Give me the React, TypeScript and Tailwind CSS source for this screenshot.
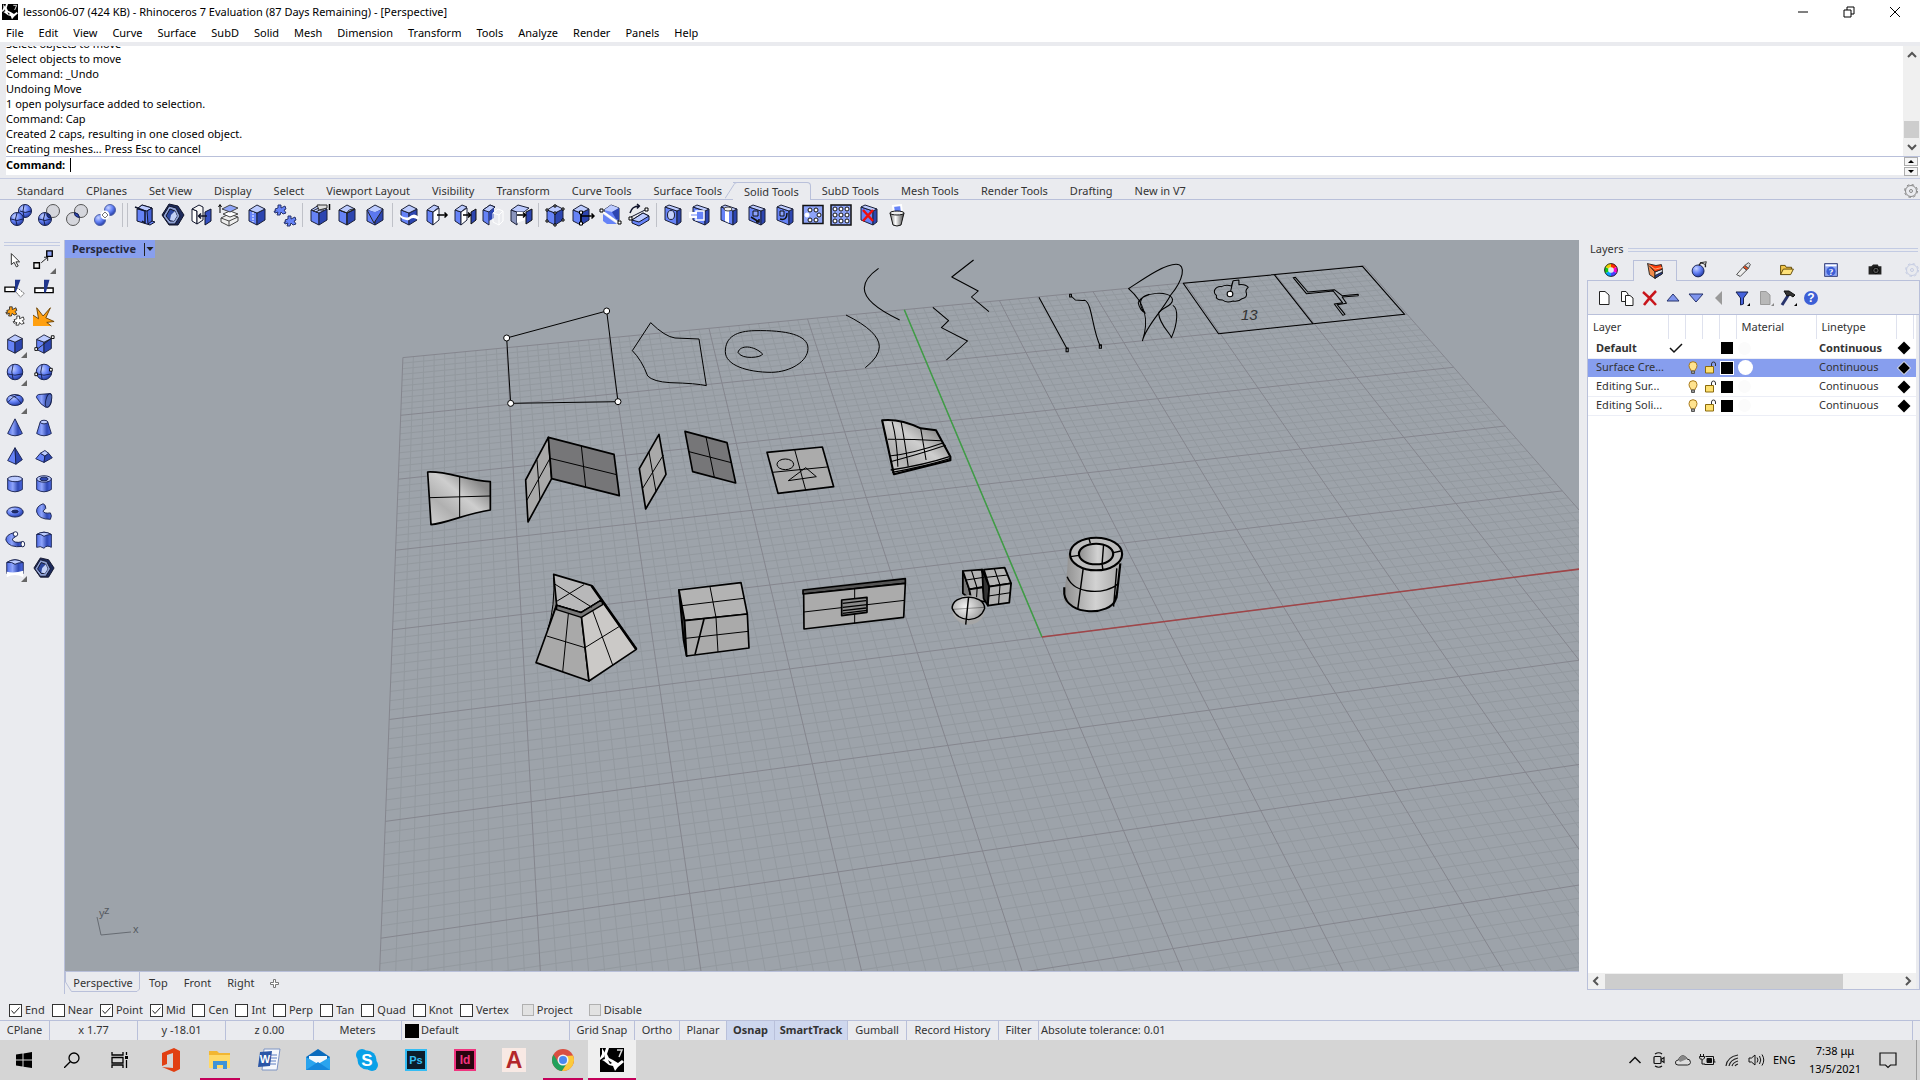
import React from 'react'
import { clsx } from 'clsx'

type Point = [number, number]

const menus = [
  'File', 'Edit', 'View', 'Curve', 'Surface', 'SubD', 'Solid', 'Mesh', 'Dimension',
  'Transform', 'Tools', 'Analyze', 'Render', 'Panels', 'Help',
]

const history = [
  'Select objects to move',
  'Select objects to move',
  'Command: _Undo',
  'Undoing Move',
  '1 open polysurface added to selection.',
  'Command: Cap',
  'Created 2 caps, resulting in one closed object.',
  'Creating meshes... Press Esc to cancel',
]

const toolTabs = [
  'Standard', 'CPlanes', 'Set View', 'Display', 'Select', 'Viewport Layout', 'Visibility',
  'Transform', 'Curve Tools', 'Surface Tools', 'Solid Tools', 'SubD Tools', 'Mesh Tools',
  'Render Tools', 'Drafting', 'New in V7',
]

const toolGroups = [
  ['union', 'difference', 'intersection', 'boolSplit'],
  ['shell', 'nut', 'extractSrf', 'offsetSlab', 'cubeDash', 'join'],
  ['filletEdge', 'cubeRound', 'cubeChamfer'],
  ['wireCut', 'moveFace', 'moveFaceTo', 'ghostFace', 'extrudeFace'],
  ['cubePoints', 'moveEdge', 'cutEdge', 'rotateFace'],
  ['hole', 'holeRect', 'holeRound', 'holeMove', 'holeRotate', 'holeArray', 'holeGrid', 'holeDelete', 'holeBin'],
]

const sideTools: [string, boolean][] = [
  ['pointer', false], ['moveCopy', true],
  ['trim', false], ['split', false],
  ['joinOrange', false], ['explode', false],
  ['cube', true], ['cubeDiagonal', false],
  ['sphere', true], ['sphereDots', false],
  ['ellipsoid', true], ['paraboloid', false],
  ['cone', false], ['truncCone', false],
  ['pyramid', false], ['truncPyramid', false],
  ['cylinder', false], ['tube', false],
  ['torus', false], ['pipe', false],
  ['pipeCaps', false], ['extrudeCurve', false],
  ['extrudeSrf', true], ['nut', false],
]

const osnaps: [string, boolean][] = [
  ['End', true], ['Near', false], ['Point', true], ['Mid', true], ['Cen', false], ['Int', false],
  ['Perp', false], ['Tan', false], ['Quad', false], ['Knot', false], ['Vertex', false],
]

const layers = [
  { name: 'Default', current: true, selected: false },
  { name: 'Surface Cre...', current: false, selected: true },
  { name: 'Editing Sur...', current: false, selected: false },
  { name: 'Editing Soli...', current: false, selected: false },
]

const cubeBody = (
  <g stroke="#1b2038" strokeLinejoin="round">
    <path d="M4 7 12 10V22L4 18Z" fill="#6683f7" />
    <path d="M12 10 20 6V17L12 22Z" fill="#2c45b0" />
    <path d="M4 7 12 2 20 6 12 10Z" fill="#bccbff" />
  </g>
)

const slabBody = (
  <g stroke="#1b2038" strokeLinejoin="round">
    <path d="M4 4 16 8V22L4 17Z" fill="#6683f7" />
    <path d="M16 8 20 6V19L16 22Z" fill="#2c45b0" />
    <path d="M4 4 8 2 20 6 16 8Z" fill="#bccbff" />
  </g>
)

const halfBox = (
  <g stroke="#1b2038" strokeLinejoin="round">
    <path d="M2 7 8 9V22L2 18Z" fill="#6683f7" />
    <path d="M2 7 9 2 14 4 8 9Z" fill="#bccbff" />
    <path d="M8 9 14 5V17L8 22Z" fill="#fff" />
  </g>
)

const sphereBody = (
  <g stroke="#16204e">
    <circle cx="12" cy="12" r="8.5" fill="url(#ball)" />
    <path d="M3.5 14Q12 17 20.5 14M10 3.8Q7 12 10 20.2" fill="none" />
  </g>
)

const puzzle = 'M2 6 5 5 5 2 8 2 8 5 12 3 13 6 11 7 13 10 10 11 8 9 7 12 4 12 5 9 2 10 1 8 3 8Z'

const nutBody = (
  <g strokeLinejoin="round">
    <path d="M1 12 8 1 17 3 23 12 17 22 8 22Z" fill="#1d2a5c" stroke="#10142b" />
    <path d="M2 13 8 3 15 5 19 13 14 21 8 21Z" fill="#8fa1d4" stroke="#10142b" />
    <path d="M5 13 9 6 14 8 16 13 13 18 9 18Z" fill="#2c479f" stroke="#10142b" />
    <path d="M9 17 10 12 14 8 16 13 13 18Z" fill="#c3d1f7" />
  </g>
)

const icons: Record<string, React.ReactNode> = {
  union: (
    <g stroke="#16204e">
      <circle cx="16" cy="8" r="6.5" fill="url(#ball)" />
      <circle cx="8" cy="16" r="6.5" fill="url(#ball)" />
      <path d="M2 16Q8 19 14 16M8 10Q5 16 8 22M15 2Q13 8 15 14M11 8Q16 11 22 8" fill="none" />
    </g>
  ),
  difference: (
    <g stroke="#16204e">
      <circle cx="8" cy="16" r="6.5" fill="url(#ball)" />
      <path d="M2 16Q8 19 14 16M8 10Q5 16 8 22" fill="none" />
      <circle cx="16" cy="8" r="6.5" fill="#d5d6dc" stroke="#555" />
      <path d="M10 10Q14 11 14 15Q9 15 10 10Z" fill="#1c2f86" />
    </g>
  ),
  intersection: (
    <g stroke="#555">
      <circle cx="16" cy="8" r="6.5" fill="#d5d6dc" />
      <circle cx="8" cy="16" r="6.5" fill="#d5d6dc" />
      <path d="M9.500 9.500Q14 10 14.500 14.500Q9 14 9.500 9.500Z" fill="#2c45b0" stroke="#16204e" />
    </g>
  ),
  boolSplit: (
    <g stroke="#5163a8">
      <circle cx="17" cy="7" r="5.500" fill="url(#ball)" />
      <circle cx="7" cy="17" r="5.500" fill="url(#ball)" />
      <circle cx="12" cy="12" r="3.500" fill="#eceef6" stroke="#fff" strokeWidth="2" />
      <path d="M9 12 12 9 15 12 12 15Z" fill="#fff" stroke="#777" />
    </g>
  ),
  shell: (
    <g stroke="#10142b" strokeLinejoin="round">
      <path d="M4 6 9 2 19 5V18L22 19 17 22 4 18Z" fill="#6683f7" />
      <path d="M4 6 9 2 19 5 14 8Z" fill="#bccbff" />
      <path d="M14 8 19 5V18L15 21Z" fill="#4662d8" />
      <path d="M2 4 12 8V20L9 18" fill="none" strokeWidth="1.500" />
    </g>
  ),
  nut: nutBody,
  extractSrf: (
    <g stroke="#10142b" strokeLinejoin="round">
      <path d="M3 6 8 8V21L3 18Z" fill="#fff" />
      <path d="M3 6 10 2 14 4V17L8 21V8Z" fill="#f5f5f5" />
      <path d="M16 9 22 6V18L16 22Z" fill="#3551c4" />
      <path d="M18 13H10M12 10.500 9.500 13 12 15.500" fill="none" strokeWidth="1.500" />
    </g>
  ),
  offsetSlab: (
    <g stroke="#444" strokeLinejoin="round">
      <path d="M4 15 12 11 21 14V18L12 23 4 19Z" fill="#eee" />
      <path d="M4 15 12 18 21 14M12 18V23" fill="none" />
      <path d="M6 11 13 8 21 11 13 14Z" fill="#fff" />
      <path d="M5 6 13 2 21 5 13 9Z" fill="#8ea4f8" />
      <path d="M3 10V2M1.500 4 3 1.500 4.500 4" fill="none" stroke="#000" />
    </g>
  ),
  cubeDash: <g>{cubeBody}<path d="M8 9V19" stroke="#fff" strokeDasharray="2 1" /></g>,
  join: (
    <g fill="#6683f7" stroke="#27336c">
      <path d={puzzle} />
      <path d={puzzle} transform="translate(10 11)" />
    </g>
  ),
  filletEdge: (
    <g>
      {cubeBody}
      <path d="M6 8Q12 4 14 6M9 9Q12 6 17 7" fill="none" stroke="#222" />
      <path d="M22.500 1V7" stroke="#000" strokeWidth="1.500" />
      <path d="M10 2H20V5L12 7Z" fill="#ddd" stroke="#333" />
    </g>
  ),
  cubeRound: <g>{cubeBody}<path d="M12 22V10L20 6Q13 6 12 10L4 7" fill="none" stroke="#222" /></g>,
  cubeChamfer: (
    <g>
      {cubeBody}
      <path d="M4 7 11 20 20 6 12 9Z" fill="#5c78ef" />
      <path d="M4 7 11 20 20 6" fill="none" stroke="#222" />
    </g>
  ),
  wireCut: (
    <g>
      {cubeBody}
      <path d="M2 11Q8 16 12 14Q17 9 22 14L21 17Q16 13 12 17Q7 18 3 14Z" fill="#fff" />
    </g>
  ),
  moveFace: <g>{halfBox}<path d="M12 12H22M19.500 9.500 22 12 19.500 14.500" fill="none" stroke="#000" strokeWidth="1.500" /></g>,
  moveFaceTo: (
    <g>
      {halfBox}
      <path d="M18 9 23 6V17L18 21Z" fill="#2c45b0" stroke="#111" />
      <path d="M10 12H17M15 9.500 17.500 12 15 14.500" fill="none" stroke="#000" strokeWidth="1.500" />
    </g>
  ),
  ghostFace: (
    <g>
      <path d="M2 7 9 2 14 4 8 9V22L2 18Z" fill="#6683f7" stroke="#1b2038" />
      <path d="M2 7 9 2 14 4 8 9Z" fill="#bccbff" stroke="#1b2038" />
      <path d="M8 9 13 5V15L8 18Z" fill="#2c45b0" />
      <path d="M12 10 17 6 22 8V18L18 22 12 19ZM12 10 18 12 22 8M18 12V22" fill="none" stroke="#fff" />
    </g>
  ),
  extrudeFace: (
    <g>
      <path d="M2 7 8 9V22L2 18Z" fill="#8a95bd" stroke="#1b2038" />
      <path d="M2 7 9 2 20 5 15 9 8 9Z" fill="#bccbff" stroke="#1b2038" />
      <path d="M8 9 16 9V17L8 20Z" fill="#fff" />
      <path d="M17 9 23 6V17L17 21Z" fill="#2c45b0" stroke="#111" />
      <path d="M8 12H16M14 9.500 16.500 12 14 14.500" fill="none" stroke="#000" strokeWidth="1.500" />
    </g>
  ),
  cubePoints: (
    <g>
      {cubeBody}
      <path d="M3 6h2v2H3zM11 2h2v2h-2zM19 5h2v2h-2zM11 9h2v2h-2zM3 17h2v2H3zM11 21h2v2h-2zM19 16h2v2h-2z" fill="#fff" stroke="#000" />
    </g>
  ),
  moveEdge: (
    <g>
      <g transform="translate(-2 0)">{cubeBody}</g>
      <path d="M10 8V20M10 13H23M20.500 10.500 23 13 20.500 15.500" fill="none" stroke="#000" strokeWidth="1.500" />
      <path d="M8.500 8h3v3h-3zM8.500 19h3v3h-3z" fill="#fff" stroke="#000" />
    </g>
  ),
  cutEdge: (
    <g>
      <path d="M5 7 12 2 20 5V17L18 18 6 10Z" fill="#6683f7" stroke="#1b2038" />
      <path d="M5 7 12 2 20 5 13 9Z" fill="#bccbff" />
      <path d="M13 9 20 5V17L17 16Z" fill="#2c45b0" />
      <path d="M4 11 18 21H8L4 18Z" fill="#6683f7" />
      <path d="M3 8 20 20" stroke="#fff" strokeWidth="2" />
      <path d="M1 6h3v3H1zM19 18h3v3h-3z" fill="#fff" stroke="#000" />
    </g>
  ),
  rotateFace: (
    <g stroke="#10142b" strokeLinejoin="round">
      <path d="M5 17 16 10 22 13V17L12 23 5 20Z" fill="#6683f7" />
      <path d="M5 17 16 10 22 13 12 19Z" fill="#bccbff" />
      <path d="M4 14 18 7" />
      <path d="M3 10Q5 3 12 3M10 1 12.500 3 10 5.500" fill="none" strokeWidth="1.500" />
      <path d="M2 14h3v3H2zM18 5h3v3h-3z" fill="#fff" stroke="#000" />
    </g>
  ),
  hole: <g>{slabBody}<ellipse cx="10" cy="12" rx="3.500" ry="4.500" fill="#c5d1fb" stroke="#1b2038" /></g>,
  holeRect: (
    <g>
      {slabBody}
      <path d="M7 8H15V17H7Z" fill="none" stroke="#fff" strokeWidth="1.500" />
      <path d="M0 9H8V15H0Z" fill="#fff" />
      <path d="M2 12H12" stroke="#6683f7" />
    </g>
  ),
  holeRound: (
    <g>
      {slabBody}
      <path d="M8 6 12 8V20L8 18Z" fill="#fff" />
      <ellipse cx="11" cy="6" rx="4" ry="2" fill="#eee" stroke="#444" />
    </g>
  ),
  holeMove: <g>{slabBody}<path d="M8 8H13V13H8Z" fill="#8da3fb" stroke="#111" /><path d="M6 14 14 19M14 16V19H11" fill="none" stroke="#111" strokeWidth="1.500" /></g>,
  holeRotate: <g>{slabBody}<path d="M7 8H11V13H7Z" fill="#8da3fb" stroke="#111" /><path d="M7 16Q14 18 14 10" fill="none" stroke="#111" strokeWidth="1.500" /></g>,
  holeArray: (
    <g stroke="#111">
      <rect x="2" y="2.500" width="20" height="18" fill="#8ea4f8" strokeWidth="1.500" />
      <g fill="#fff">
        <circle cx="9" cy="7" r="2" /><circle cx="15" cy="7" r="2" /><circle cx="18" cy="12" r="2" />
        <circle cx="15" cy="17" r="2" /><circle cx="9" cy="17" r="2" /><circle cx="6" cy="12" r="2" stroke="#fff" />
      </g>
    </g>
  ),
  holeGrid: (
    <g stroke="#111">
      <rect x="2" y="2" width="20" height="20" fill="#8ea4f8" strokeWidth="1.500" />
      {[6, 12, 18].map(cy => [6, 12, 18].map(cx => <circle key={`${cx}-${cy}`} cx={cx} cy={cy} r="2" fill="#fff" />))}
    </g>
  ),
  holeDelete: <g>{slabBody}<path d="M6 7 16 18M16 7 6 18" stroke="#f00d0d" strokeWidth="2.500" /></g>,
  holeBin: (
    <g>
      <path d="M8 3 16 2 17 10H9Z" fill="#6683f7" stroke="#fff" strokeWidth="2" />
      <path d="M5 10 8 22Q12 24 16 22L19 10Z" fill="url(#steel)" stroke="#111" />
      <ellipse cx="12" cy="10" rx="7" ry="2" fill="#eee" stroke="#111" />
    </g>
  ),
  pointer: <path d="M8 5V17L11 14.500 13.500 19.500 15.500 18.500 13 14H17Z" fill="#fff" stroke="#222" />,
  moveCopy: (
    <g>
      <path d="M9 15 16 9M12 9H16V13" fill="none" stroke="#111" />
      <path d="M1 15h6v6H1z" fill="#eee" stroke="#000" strokeWidth="1.500" />
      <path d="M15 2h6v6h-6z" fill="#8ea4f8" stroke="#000" strokeWidth="1.500" />
    </g>
  ),
  trim: (
    <g>
      <path d="M1 11H12V16H1Z" fill="#fff" stroke="#000" strokeWidth="1.500" />
      <path d="M12 15 15 12 22 18 18 22Z" fill="#fff" stroke="#444" strokeDasharray="2 1" />
      <path d="M12 3H18L13 16H12Z" fill="#20368d" />
    </g>
  ),
  split: (
    <g>
      <path d="M2 12H22V17H2Z" fill="#fff" stroke="#000" strokeWidth="1.500" />
      <path d="M12 3H18L14 17H12Z" fill="#20368d" />
    </g>
  ),
  joinOrange: (
    <g stroke="#333">
      <path d={puzzle} fill="#ffa011" transform="translate(1 0)" />
      <path d={puzzle} fill="#fff" transform="translate(9 10)" />
    </g>
  ),
  explode: (
    <g>
      <path d="M0 23V11L6 15 4 3 11 12 19 3 14 14 23 18 15 19 20 23Z" fill="#ffa011" />
      <path d="M0 11 6 15 4 3 11 12 19 3 14 14 23 18 15 19 20 23" fill="none" stroke="#6b4200" />
    </g>
  ),
  cube: cubeBody,
  cubeDiagonal: (
    <g>
      {cubeBody}
      <path d="M4 18 21 5" stroke="#222" />
      <path d="M2 16h3v3H2zM20 3h3v3h-3z" fill="#fff" stroke="#000" />
    </g>
  ),
  sphere: sphereBody,
  sphereDots: <g>{sphereBody}<path d="M2 13h3v3H2zM18 8h3v3h-3z" fill="#fff" stroke="#000" /></g>,
  ellipsoid: (
    <g stroke="#16204e">
      <ellipse cx="12" cy="12" rx="9" ry="6" fill="url(#ball)" />
      <path d="M4 15Q11 6 17 7M7 7Q14 8 19 16" fill="none" />
    </g>
  ),
  paraboloid: (
    <g stroke="#16204e">
      <path d="M19 5 6 6Q2 8 5 11Q8 17 14 20Q20 20 20 12Z" fill="url(#metal)" />
      <ellipse cx="17" cy="12.500" rx="3" ry="7.500" fill="#5069bd" transform="rotate(14 17 12.500)" />
    </g>
  ),
  cone: <path d="M12 2 20 18Q12 23 4 18Z" fill="url(#metal)" stroke="#16204e" />,
  truncCone: (
    <g stroke="#16204e">
      <path d="M8 5 4 18Q12 23 20 18L16 5Z" fill="url(#metal)" />
      <ellipse cx="12" cy="5.500" rx="4" ry="2" fill="#bccbff" />
    </g>
  ),
  pyramid: (
    <g stroke="#16204e" strokeLinejoin="round">
      <path d="M12 3 4 17 13 21Z" fill="#6683f7" />
      <path d="M12 3 13 21 20 16Z" fill="#2c45b0" />
    </g>
  ),
  truncPyramid: (
    <g stroke="#16204e" strokeLinejoin="round">
      <path d="M8 9 3 15 12 19 13 12Z" fill="#6683f7" />
      <path d="M13 12 12 19 21 14 17 9Z" fill="#2c45b0" />
      <path d="M8 9 13 6 17 9 13 12Z" fill="#bccbff" />
    </g>
  ),
  cylinder: (
    <g stroke="#16204e">
      <path d="M4 6V18Q12 23 20 18V6Z" fill="url(#metal)" />
      <ellipse cx="12" cy="6.500" rx="8" ry="3" fill="#bccbff" />
    </g>
  ),
  tube: (
    <g stroke="#16204e">
      <path d="M4 6V18Q12 23 20 18V6Z" fill="url(#metal)" />
      <ellipse cx="12" cy="6.500" rx="8" ry="3.500" fill="#bccbff" />
      <ellipse cx="12" cy="6.500" rx="4.500" ry="2" fill="#2c45b0" />
    </g>
  ),
  torus: (
    <g stroke="#16204e">
      <ellipse cx="12" cy="12" rx="9" ry="5.500" fill="url(#ball)" />
      <ellipse cx="12" cy="11.500" rx="3.500" ry="1.500" fill="#1b2c74" />
    </g>
  ),
  pipe: <path d="M11 3Q3 6 4 12Q6 20 19 20Q21 16 19 13Q12 14 11 11L14 8Q14 4 11 3Z" fill="url(#metal)" stroke="#16204e" />,
  pipeCaps: (
    <g stroke="#16204e">
      <path d="M11 4Q2 6 2 12Q5 21 21 19L20 14Q10 16 9 11L13 8Z" fill="url(#metal)" />
      <circle cx="12.500" cy="5.500" r="2.500" fill="#fff" />
      <ellipse cx="20.500" cy="16.500" rx="2" ry="3" fill="#fff" />
    </g>
  ),
  extrudeCurve: (
    <g stroke="#16204e">
      <path d="M4 6Q12 1 20 6V20Q15 17 12 21Q8 18 4 20Z" fill="url(#metal)" />
      <path d="M4 6Q12 1 20 6Q15 6 12 8Q9 5 4 6Z" fill="#bccbff" />
    </g>
  ),
  extrudeSrf: (
    <g>
      <path d="M3 6Q12 0 21 6V18H3Z" fill="url(#metal)" stroke="#16204e" />
      <path d="M3 6Q12 0 21 6Q15 6 12 8Q9 5 3 6Z" fill="#bccbff" stroke="#16204e" />
      <path d="M3 16Q11 18 21 15V22Q12 17 3 22Z" fill="#fff" />
    </g>
  ),
  // panel tabs
  wheel: (
    <g fill="none" strokeWidth="4">
      <path d="M12 7A5 5 0 0 1 16.500 9.500" stroke="#ff2a00" />
      <path d="M16.500 9.500A5 5 0 0 1 16.500 14.500" stroke="#ff00c8" />
      <path d="M16.500 14.500A5 5 0 0 1 12 17" stroke="#4a3cff" />
      <path d="M12 17A5 5 0 0 1 7.500 14.500" stroke="#00a2ff" />
      <path d="M7.500 14.500A5 5 0 0 1 7.500 9.500" stroke="#12c816" />
      <path d="M7.500 9.500A5 5 0 0 1 12 7" stroke="#f0d000" />
      <circle cx="12" cy="12" r="7" stroke="#222" strokeWidth="1" />
    </g>
  ),
  layersTab: (
    <g strokeLinejoin="round" stroke="#222">
      <path d="M4 4 12 13V20L6 16Z" fill="#f08a4a" />
      <path d="M12 13 20 10V15L12 20Z" fill="#e6e9f5" />
      <path d="M12 17 20 13V15L12 20Z" fill="#27409c" />
      <path d="M4 4 13 6 19 5 20 10 12 13Z" fill="#ff3c0a" />
      <path d="M5 5 12 10 20 8" fill="none" stroke="#ffb07a" />
    </g>
  ),
  bomb: (
    <g>
      <circle cx="11" cy="13" r="6.500" fill="url(#ball)" stroke="#16204e" />
      <path d="M12 7 14 4 19 5V9" fill="none" stroke="#222" strokeWidth="1.500" />
      <path d="M14 4 20 3 19 6Z" fill="#fff" stroke="#222" />
    </g>
  ),
  tube2: (
    <g strokeLinejoin="round" stroke="#444">
      <path d="M5 17 12 9 16 12 9 19Z" fill="#eee" />
      <path d="M12 9 14 7 18 10 16 12Z" fill="#f0501e" />
      <path d="M14 7 18 4 20 6 18 10Z" fill="#ddd" />
    </g>
  ),
  folder: (
    <g stroke="#5b4300" strokeLinejoin="round">
      <path d="M5 17V7H10L11 9H17V11" fill="#f3c64b" />
      <path d="M5 17 8 11H19L16 17Z" fill="#ffe27a" />
    </g>
  ),
  helpTab: (
    <g>
      <path d="M5 5H19V19H5Z" fill="#8fa6f2" stroke="#333d75" />
      <path d="M6 6H18V8H6Z" fill="#fff" />
      <circle cx="12" cy="13.500" r="5" fill="#3d5fd6" />
      <text x="12" y="17" fontSize="10" fontWeight="700" fill="#fff" textAnchor="middle" fontFamily="Liberation Serif">?</text>
    </g>
  ),
  camera: (
    <g fill="#222">
      <path d="M5 8H8L10 6H15L16 8H19V17H5Z" />
      <circle cx="13" cy="12.500" r="3.500" fill="#555" stroke="#000" />
      <circle cx="13" cy="12.500" r="1.500" fill="#111" />
    </g>
  ),
  // panel actions
  page: <path d="M7.500 5.500H13L17 9V18.500H7.500Z" fill="#fff" stroke="#222" />,
  pages: <g fill="#fff" stroke="#222"><path d="M6.500 5.500H11L13 8V15.500H6.500Z" /><path d="M10.500 9.500H15L18 12V19.500H10.500Z" /></g>,
  cross: <path d="M5 6Q11 11 18 19M18 5Q12 11 6 19" stroke="#c8151b" strokeWidth="2.500" fill="none" />,
  up: <path d="M12 8 18 15H6Z" fill="#7f95ee" stroke="#27336c" />,
  down: <path d="M5 8H19L12 16Z" fill="#7f95ee" stroke="#27336c" />,
  left: <path d="M15 5V19L8 12Z" fill="#9a9a9a" />,
  filter: (
    <g>
      <path d="M6 6H18L13.500 12V18L10.500 19V12Z" fill="#4562dc" stroke="#16204e" />
      <path d="M20 17V20H17Z" fill="#000" />
    </g>
  ),
  pageGray: <g><path d="M7.500 5.500H13L17 9V18.500H7.500Z" fill="#b8b8b8" stroke="#9a9a9a" /><path d="M21 17V20H18Z" fill="#888" /></g>,
  hammer: (
    <g>
      <path d="M13 8 6 19" stroke="#27336c" strokeWidth="3" />
      <path d="M8 5 13 5 19 9 17 11 14 9 11 10Z" fill="#333" stroke="#111" />
      <path d="M21 17V20H18Z" fill="#000" />
    </g>
  ),
  help: (
    <g>
      <circle cx="12" cy="12" r="7" fill="#3d5fd6" />
      <text x="12" y="16" fontSize="12" fontWeight="700" fill="#fff" textAnchor="middle" fontFamily="Liberation Sans">?</text>
    </g>
  ),
}

interface IconProps {
  name: string
  className?: string
}

const Icon: React.FC<IconProps> = ({ name, className = 'size-6' }) => (
  <svg viewBox="0 0 24 24" className={clsx('shrink-0', className)} aria-hidden="true">
    {icons[name]}
  </svg>
)

const RhinoLogo: React.FC<{ className: string }> = ({ className }) => (
  <svg viewBox="0 0 24 24" className={className} aria-hidden="true">
    <path d="M0 0H24V24H0Z" fill="#000" />
    <path d="M6 0H9L7 6 9 10 13 12 18 15 22 12 24 14 18 19 15 23 13 18 9 17 4 13 2 12 5 11 4 6Z" fill="#fff" />
    <path d="M2 0 5 5 4 9 0 12V10L2 6Z" fill="#fff" />
    <path d="M8 12 12 15 10 16Z" fill="#000" />
    <path d="M17 2H22L19 9" fill="none" stroke="#ddd" strokeWidth="1.500" />
  </svg>
)

const Gear: React.FC<{ className: string }> = ({ className }) => (
  <svg viewBox="0 0 16 16" className={clsx('size-4 shrink-0', className)} fill="none" stroke="currentColor" aria-hidden="true">
    <circle cx="8" cy="8" r="5.500" />
    <circle cx="8" cy="8" r="6.500" strokeDasharray="2.500 2.600" />
    <circle cx="8" cy="8" r="1.500" />
  </svg>
)

const Chevron: React.FC<{ d: string }> = ({ d }) => (
  <svg viewBox="0 0 10 10" className="size-2.5" fill="none" stroke="#555" strokeWidth="2" aria-hidden="true">
    <path d={d} />
  </svg>
)

// projects a point of the construction plane (in major grid cells) to the view
const project = (u: number, v: number): Point => {
  const w = 0.01115 * u + 0.0601 * v + 1
  return [(134.9 * u + 26.8 * v + 1042) / w, (-8.48 * u - 46.85 * v + 637) / w]
}

const segment = (a: Point, b: Point) =>
  `M${a[0].toFixed(1)} ${a[1].toFixed(1)}L${b[0].toFixed(1)} ${b[1].toFixed(1)}`

const gridPath = (major: boolean) => {
  let d = ''
  for (let i = -50; i <= 50; i++) {
    if ((i % 10 === 0) !== major) continue
    const t = i / 10
    d += segment(project(t, -4.5), project(t, 5))
    if (t > -4.6) d += segment(project(-5, t), project(5, t))
  }
  return d
}

const Scene: React.FC = () => (
  <svg viewBox="65 240 1514 731" preserveAspectRatio="xMinYMin slice" className="block w-full h-full" aria-label="Perspective view">
    <defs>
      <radialGradient id="ball" cx="0.35" cy="0.3" r="0.75">
        <stop offset="0" stopColor="#c6d3ff" />
        <stop offset="0.5" stopColor="#6683f7" />
        <stop offset="1" stopColor="#2038a0" />
      </radialGradient>
      <linearGradient id="metal">
        <stop offset="0" stopColor="#4f6ce6" />
        <stop offset="0.35" stopColor="#8fa5fb" />
        <stop offset="0.7" stopColor="#3049b4" />
        <stop offset="1" stopColor="#4f6ce6" />
      </linearGradient>
      <linearGradient id="steel">
        <stop offset="0" stopColor="#777" />
        <stop offset="0.4" stopColor="#fff" />
        <stop offset="1" stopColor="#444" />
      </linearGradient>
      <linearGradient id="loft" x1="0" y1="1" x2="1" y2="0">
        <stop offset="0" stopColor="#d2d2d2" />
        <stop offset="0.3" stopColor="#b0b0b0" />
        <stop offset="0.55" stopColor="#cecece" />
        <stop offset="0.8" stopColor="#8b8b8b" />
        <stop offset="1" stopColor="#808080" />
      </linearGradient>
      <linearGradient id="pipeSide">
        <stop offset="0" stopColor="#8e8e8e" />
        <stop offset="0.55" stopColor="#d2d2d2" />
        <stop offset="1" stopColor="#a5a5a5" />
      </linearGradient>
      <radialGradient id="grayBall" cx="0.4" cy="0.4">
        <stop offset="0" stopColor="#f4f4f4" />
        <stop offset="1" stopColor="#a6a6a6" />
      </radialGradient>
    </defs>
    <path d="M0 200H1700V1100H0Z" fill="#9da3aa" />
    <path d={gridPath(false)} stroke="#93999f" fill="none" />
    <path d={gridPath(true)} stroke="#85868e" fill="none" />
    <path d={segment(project(0, 0), project(0, 5))} stroke="#3f9d45" strokeWidth="1.500" />
    <path d={segment(project(0, 0), project(5, 0))} stroke="#a04548" strokeWidth="1.500" />

    {/* left half of the model */}
    <g transform="translate(380 240) scale(0.33333)" fill="none" stroke="#000" strokeWidth="3" strokeLinejoin="round">
      <path d="M380 294 680 213 714 485 392 490Z" />
      <g fill="#fff">
        <circle cx="380" cy="294" r="9" /><circle cx="680" cy="213" r="9" />
        <circle cx="714" cy="485" r="9" /><circle cx="392" cy="490" r="9" />
      </g>
      <path d="M812 248Q855 290 885 294L957 297 979 437Q950 430 870 428Q820 425 803 408Q785 360 757 332Z" />
      <path d="M1036 335C1036 290 1070 273 1125 272C1220 270 1284 285 1284 325C1284 365 1230 396 1175 397C1100 397 1036 375 1036 335Z" />
      <path d="M1074 337C1080 315 1120 315 1148 342C1145 353 1085 360 1074 337Z" />
      <path d="M1398 225Q1498 275 1498 320Q1498 350 1456 383" />

      <path d="M143 696C200 692 260 722 331 725V810C260 820 200 850 153 854Z" fill="url(#loft)" strokeWidth="5" />
      <path d="M149 773 331 768M239 710V832" />

      <path d="M505 592 437 720 444 846 515 716Z" fill="#a9a9a9" strokeWidth="5" />
      <path d="M505 592 702 643 718 767 515 716Z" fill="#767678" strokeWidth="5" />
      <path d="M471 660 480 780M440 782 510 655 710 704M604 618 617 740" />
      <path d="M837 583 778 686 797 807 858 703Z" fill="#a9a9a9" strokeWidth="5" />
      <path d="M807 636 828 755M788 745 850 645" />
      <path d="M915 574 1041 608 1067 729 938 695Z" fill="#767678" strokeWidth="5" />
      <path d="M978 591 1003 712M927 635 1054 668" />
      <path d="M1161 637 1327 621 1361 740 1194 760Z" fill="#ababab" strokeWidth="5" />
      <path d="M1244 629 1277 750M1177 697 1342 681M1225 722 1277 683 1309 710Z" />
      <ellipse cx="1216" cy="673" rx="25" ry="16" />

      <path d="M521 1003Q526 1100 503 1170L530 1090Z" fill="#8b8b8b" />
      <path d="M521 1003 635 1037 665 1080 603 1118 530 1096Z" fill="#b8b8b9" strokeWidth="5" />
      <path d="M530 1096 603 1118 627 1323 468 1268Z" fill="#a9a9a9" strokeWidth="5" />
      <path d="M603 1118 665 1080 769 1228 627 1323Z" fill="#cbc9c7" strokeWidth="5" />
      <path d="M635 1037 769 1228" strokeWidth="8" />
      <path d="M530 1096 603 1118 665 1080 668 1094 604 1132 530 1109Z" fill="#777" strokeWidth="4" />
      <path d="M524 1032 636 1102M530 1084 612 1034M565 1122 548 1296M500 1188 615 1223 717 1160M638 1112 698 1275" />

      <path d="M897 1050 914 1142 920 1248 911 1200Z" fill="#444" strokeWidth="6" />
      <path d="M897 1050 1083 1028 1102 1122 914 1142Z" fill="#b3b3b3" strokeWidth="5" />
      <path d="M914 1142 1102 1122 1107 1224 920 1248Z" fill="#aaa" strokeWidth="5" />
      <path d="M990 1040 1008 1132 1014 1236M906 1097 1092 1075M917 1195 1105 1174" />
      <path d="M972 1137 945 1244" strokeWidth="5" />

      <path d="M1269 1050 1576 1016V1030L1269 1062Z" fill="#555" strokeWidth="5" />
      <path d="M1271 1062 1576 1030 1571 1132 1272 1167Z" fill="#ababab" strokeWidth="5" />
      <path d="M1272 1116 1574 1081M1424 1046V1150" />
      <path d="M1385 1080 1461 1072V1117L1385 1127Z" fill="#8a8a8a" strokeWidth="5" />
      <path d="M1388 1090 1458 1082M1388 1102 1461 1094M1388 1112 1458 1104M1388 1120 1461 1111" strokeWidth="4" />
    </g>

    {/* right half */}
    <g transform="translate(860 240) scale(0.35714 0.33333)" fill="none" stroke="#000" strokeWidth="3" strokeLinejoin="round">
      <path d="M52 85Q12 115 12 145Q12 190 111 240" />
      <path d="M318 60 257 111 331 153 312 171 361 215M204 202 248 242 228 263 301 303 242 360" />
      <path d="M501 172 580 327M577 324H583V335H577ZM587 163H592V171H587ZM591 168 603 180Q620 182 630 181C650 190 650 270 673 319M670 314H676V325H670Z" />
      <path d="M752 146C790 120 850 73 885 73C915 73 905 120 870 165C845 215 800 260 791 302C810 240 800 190 752 146Z" />
      <path d="M779 188C790 155 870 150 875 178C878 198 840 205 836 220C840 255 865 275 872 293C890 250 892 205 876 196M779 188C782 205 790 215 800 220M797 218C780 195 780 170 810 163" />
      <path d="M905 130 1407 79 1525 223 1004 281ZM1160 104 1268 251" />
      <path d="M993 150Q1000 138 1012 140Q1025 132 1040 138L1045 122 1061 120V134Q1080 132 1087 142Q1078 150 1082 160Q1085 172 1070 176Q1060 186 1045 183Q1025 190 1015 180Q995 180 998 166Q990 160 993 150M1036 162 1044 125" />
      <circle cx="1036" cy="162" r="8" fill="#fff" />
      <path d="M1213 113 1219 112 1254 156 1328 149 1350 167 1395 163V167L1350 171 1362 190 1336 194 1358 223 1352 226 1328 192 1351 188 1325 153 1250 161Z" />

      <path d="M62 541Q110 535 170 565L213 571 253 650V661Q200 675 95 703Z" fill="url(#loft)" strokeWidth="6" />
      <path d="M86 690Q180 675 250 650M90 697Q180 680 252 656" strokeWidth="4" />
      <path d="M78 598Q150 598 228 602M85 665Q160 645 240 616M82 648Q150 640 234 608M90 545Q104 600 106 680M115 545Q125 600 135 680M170 565 185 660" />

      <path d="M582 945C582 1010 570 1050 572 1080C590 1120 700 1120 714 1085L733 940Z" fill="url(#pipeSide)" stroke="none" />
      <path d="M572 1042V1062C580 1128 700 1128 716 1078L718 1065M729 970 718 1075" strokeWidth="6" />
      <path d="M580 1010C600 1065 690 1065 724 1030M625 985 610 1105M719 985 710 1100" strokeWidth="4" />
      <ellipse cx="661" cy="942" rx="73" ry="49" fill="#bdbdbd" strokeWidth="6" />
      <ellipse cx="661" cy="942" rx="48" ry="31" fill="url(#pipeSide)" strokeWidth="6" />
      <path d="M641 895 645 910M590 950 613 946M710 938 730 933M678 973 680 988M682 915 678 970" strokeWidth="4" />

      <path d="M288 993 306 1048 312 1080 288 1060Z" fill="#777" strokeWidth="5" />
      <path d="M288 993 340 989 356 1038 306 1048Z" fill="#b3b3b3" strokeWidth="5" />
      <path d="M306 1048 344 1042 350 1085 312 1080Z" fill="#aaa" strokeWidth="5" />
      <path d="M342 988 362 1040 358 1097 346 1075Z" fill="#333" strokeWidth="5" />
      <path d="M347 989 405 983 423 1030 362 1040Z" fill="#b5b5b5" strokeWidth="5" />
      <path d="M362 1040 423 1030 418 1088 358 1097Z" fill="#b0b0b0" strokeWidth="5" />
      <path d="M376 986 392 1035 388 1092M355 1012 414 1005M360 1068 420 1058M312 991 328 1044 326 1080M297 1020 348 1012" />
      <ellipse cx="304" cy="1110" rx="45" ry="44" fill="url(#grayBall)" stroke="none" />
      <path d="M258 1105C258 1060 348 1060 349 1105C335 1150 275 1150 258 1105ZM304 1072 296 1154" strokeWidth="4" />
      <path d="M260 1108 348 1102" strokeWidth="1" />
    </g>
    <text x="1241" y="320" fontSize="15" fontStyle="italic" fill="#333" fontFamily="Liberation Sans">13</text>

    <path d="M97 917 101 935 131 932" fill="none" stroke="#666b72" />
    <g fontSize="11" fill="#555a61" fontFamily="Liberation Sans">
      <text x="133" y="933">x</text>
      <text x="99" y="917">y</text>
      <text x="104" y="914">z</text>
    </g>
  </svg>
)

const TopBars: React.FC = () => (
  <header className="bg-white">
    <div className="flex items-center h-6 pl-0.5">
      <RhinoLogo className="w-4 h-4 mr-[5px]" />
      <h1 className="text-[11px]">lesson06-07 (424 KB) - Rhinoceros 7 Evaluation (87 Days Remaining) - [Perspective]</h1>
      <div className="flex ml-auto pr-0.5">
        {['M5 10H15', 'M5 8H12V15H5ZM8 8V5H15V12H12', 'M5 5 15 15M15 5 5 15'].map((d, i) => (
          <button key={d} className="flex justify-center items-center w-[46px] h-5" aria-label={['Minimize', 'Restore', 'Close'][i]}>
            <svg viewBox="0 0 20 20" className="size-5" fill="none" stroke="#000"><path d={d} /></svg>
          </button>
        ))}
      </div>
    </div>
    <nav className="flex items-center h-[18px] pl-1.5 gap-[15px] text-[11px]">
      {menus.map(menu => <button key={menu}>{menu}</button>)}
    </nav>
  </header>
)

const CommandArea: React.FC = () => (
  <section className="pt-1 pb-[3px] pl-1.5 border-b border-[#c6cce2]">
    <div className="flex border-b border-[#b9c0da] bg-white">
      <div className="flex flex-col justify-end flex-1 h-[110px] overflow-hidden">
        {history.map((line, i) => <p key={i} className="text-[11px] leading-[15px] shrink-0">{line}</p>)}
      </div>
      <div className="flex flex-col items-center justify-between w-[17px] py-1 bg-[#f0f0f0]">
        <Chevron d="M1 7 5 3 9 7" />
        <div className="flex-1" />
        <div className="w-[15px] h-[17px] mb-1 bg-[#cdcdcd]" />
        <Chevron d="M1 3 5 7 9 3" />
      </div>
    </div>
    <div className="flex items-center h-[18px] pb-0.5 bg-white text-[11px]">
      <label htmlFor="command" className="font-bold">Command:</label>
      <span className="w-px h-[14px] ml-[5px] bg-black" />
      <input id="command" className="flex-1 outline-none" />
      <div className="flex flex-col w-[14px] h-4 mr-0.5 gap-px">
        {['M2 5 5 2 8 5Z', 'M2 2 5 5 8 2Z'].map((d, i) => (
          <button key={d} className="flex flex-1 justify-center items-center border border-[#adadad] bg-[#f5f5f5]" aria-label={i ? 'Next' : 'Previous'}>
            <svg viewBox="0 0 10 7" className="w-2.5 h-[7px]"><path d={d} fill="#000" /></svg>
          </button>
        ))}
      </div>
    </div>
  </section>
)

const ToolBar: React.FC = () => (
  <section className="pt-[3px]">
    <div className="flex items-end h-[18px] border-b border-[#b9c0da] pl-1.5 pr-px">
      {toolTabs.map(tab => (
        <button
          key={tab}
          className={clsx(
            'relative px-[11px] text-[11px] text-[#333]',
            tab === 'Solid Tools'
              ? 'h-[18px] leading-[16px] border-t border-r rounded-tr-sm border-[#b9c0da] bg-[#eaebef] -mb-px'
              : 'h-[17px] leading-[17px]',
          )}
        >
          {tab === 'Solid Tools' && (
            <svg viewBox="0 0 12 17" className="absolute -top-px -left-2 w-3 h-[17px]" fill="#eaebef" stroke="#b9c0da">
              <path d="M0 16.500 9 2.500Q10 .5 12 .5" />
            </svg>
          )}
          <span className="relative">{tab}</span>
        </button>
      ))}
      <Gear className="ml-auto text-[#888]" />
    </div>
    <div className="flex items-center h-[30px] pl-[7px]">
      {toolGroups.map((group, i) => (
        <React.Fragment key={i}>
          {i > 0 && (
            <div className={clsx('flex justify-evenly h-6', i === 1 ? 'w-3' : 'w-1.5')}>
              <span className="w-px bg-[#bfc1c8]" />
              {i === 1 && <span className="w-px bg-[#bfc1c8]" />}
            </div>
          )}
          {group.map(name => (
            <button key={name} className="flex justify-center w-7" aria-label={name}><Icon name={name} /></button>
          ))}
        </React.Fragment>
      ))}
    </div>
  </section>
)

const SideBar: React.FC = () => (
  <aside className="w-[65px] shrink-0 pt-0.5 border-r border-[#b9c0da]">
    <div className="h-1 mx-1 border-y border-[#c3cbe3]" />
    <div className="grid grid-cols-[29px_29px] auto-rows-[28px]">
      {sideTools.map(([name, flyout]) => (
        <button key={name} className="relative flex justify-center items-center" aria-label={name}>
          <Icon name={name} className="size-[22px]" />
          {flyout && (
            <svg viewBox="0 0 6 6" className="absolute right-0.5 bottom-0 size-1.5"><path d="M6 0V6H0Z" fill="#666" /></svg>
          )}
        </button>
      ))}
    </div>
  </aside>
)

const Viewport: React.FC = () => (
  <main className="flex flex-col flex-1 min-w-0">
    <div className="relative flex-1 min-h-0 border-b border-[#b9c0da]">
      <Scene />
      <button className="absolute left-0 top-0 flex items-center h-[18px] bg-[#889fee] text-[11px] font-bold text-[#26293c]">
        <span className="px-[7px]">Perspective</span>
        <span className="h-[13px] w-px ml-px bg-[#222]" />
        <svg viewBox="0 0 10 6" className="w-2.5 h-1.5"><path d="M1.500 1H8.500L5 5Z" fill="#222" /></svg>
      </button>
    </div>
    <div className="flex items-start h-[22px] text-[11px] text-[#333]">
      <button className="relative h-[22px] w-[76px]">
        <svg viewBox="0 0 75 20" className="absolute inset-x-0 top-0 w-[75px] h-5" fill="none" stroke="#b9c0da">
          <path d="M.5 0V10L6.500 19.500H72L74.500 17V0" />
        </svg>
        Perspective
      </button>
      <div className="flex items-center gap-4 h-[22px] pl-2">
        <button>Top</button>
        <button>Front</button>
        <button>Right</button>
        <button aria-label="New viewport">
          <svg viewBox="0 0 9 9" className="size-[9px]" fill="#fff" stroke="#777"><path d="M3.500.5H5.500V3.500H8.500V5.500H5.500V8.500H3.500V5.500H.5V3.500H3.500Z" /></svg>
        </button>
      </div>
    </div>
  </main>
)

const Bulb = () => (
  <svg viewBox="0 0 10 14" className="w-2.5 h-[14px]" aria-hidden="true">
    <path d="M3 9Q1 7 1 4.500A4 3.800 0 0 1 9 4.500Q9 7 7 9V10H3Z" fill="#ffe38f" stroke="#a87a1c" />
    <path d="M3.500 10H6.500V12.500H3.500Z" fill="#999" stroke="#555" />
  </svg>
)

const Lock = () => (
  <svg viewBox="0 0 13 13" className="size-[13px]" aria-hidden="true">
    <path d="M7.500 5V3Q7.500 1 9.500 1Q11.500 1 11.500 3V5" fill="none" stroke="#333" />
    <path d="M1.500 5.500H9.500V12H1.500Z" fill="#ffe170" stroke="#8a6a0c" />
  </svg>
)

const LayersPanel: React.FC = () => (
  <aside className="flex flex-col w-[341px] shrink-0 pl-2 pb-1">
    <div className="flex items-center h-[19px] pl-[3px] gap-1 pr-0.5">
      <h2 className="text-[11px] text-[#333]">Layers</h2>
      <span className="flex-1 h-1 border-y border-[#c3cbe3]" />
    </div>
    <div className="flex items-end border-b border-[#b9c0da] pl-0.5">
      {['wheel', 'layersTab', 'bomb', 'tube2', 'folder', 'helpTab', 'camera'].map(name => (
        <button
          key={name}
          className={clsx(
            'flex justify-center items-center w-11 h-[21px]',
            name === 'layersTab' && 'border border-b-0 border-[#b9c0da] bg-[#eaebef] -mb-px',
          )}
          aria-label={name}
        >
          <Icon name={name} className="size-[22px]" />
        </button>
      ))}
      <Gear className="ml-auto mb-0.5 text-[#c6cde3]" />
    </div>
    <div className="flex flex-col flex-1 min-h-0 border-x border-b border-[#b9c0da]">
      <div className="flex items-center h-[34px] pl-1 border-b border-[#b9c0da]">
        {['page', 'pages', 'cross', 'up', 'down', 'left', 'filter', 'pageGray', 'hammer', 'help'].map(name => (
          <button key={name} className="flex justify-center w-[23px]" aria-label={name}><Icon name={name} /></button>
        ))}
      </div>
      <div className="flex-1 min-h-0 mr-[3px] bg-white">
        <table className="table-fixed w-full text-[11px] text-[#333]">
          <colgroup>
            <col className="w-20" /><col className="w-[17px]" /><col className="w-[17px]" /><col className="w-[17px]" />
            <col className="w-[17px]" /><col className="w-20" /><col className="w-20" /><col className="w-[17px]" /><col />
          </colgroup>
          <thead>
            <tr className="h-6">
              {['Layer', '', '', '', '', 'Material', 'Linetype', '', ''].map((title, i) => (
                <th key={i} className={clsx('font-normal text-left border-[#dfe2ee] pl-[5px]', i < 8 && 'border-r')}>{title}</th>
              ))}
            </tr>
          </thead>
          <tbody>
            {layers.map(({ name, current, selected }) => (
              <tr
                key={name}
                className={clsx('h-[19px] border-b', selected ? 'bg-[#879eee] border-white' : 'border-[#eceef6]', current && 'font-bold')}
              >
                <td className="pl-2 whitespace-nowrap">{name}</td>
                <td>
                  {current && (
                    <svg viewBox="0 0 14 12" className="block ml-px w-[14px] h-3" fill="none" stroke="#111" strokeWidth="1.500"><path d="M1 6 5 10 13 2" /></svg>
                  )}
                </td>
                <td><div className="flex justify-center pr-px">{!current && <Bulb />}</div></td>
                <td><div className="flex justify-center pr-px">{!current && <Lock />}</div></td>
                <td><div className={clsx('size-3 ml-0.5 bg-black', selected && 'ring-1 ring-white')} /></td>
                <td><div className={clsx('rounded-full ml-0.5', selected ? 'size-[15px] bg-white' : 'size-[13px] bg-[#fbfbfb]')} /></td>
                <td className="pl-[3px]">Continuous</td>
                <td>
                  <svg viewBox="0 0 14 14" className="block ml-px size-[14px]"><path d="M7 .5 13.500 7 7 13.500.5 7Z" fill="#000" stroke={selected ? '#fff' : 'none'} /></svg>
                </td>
                <td />
              </tr>
            ))}
          </tbody>
        </table>
      </div>
      <div className="flex items-center h-4 mr-[3px] px-[3px] gap-1 bg-[#f0f0f0]">
        <Chevron d="M7 1 3 5 7 9" />
        <div className="flex-1"><div className="w-[81%] h-[15px] bg-[#cdcdcd]" /></div>
        <Chevron d="M3 1 7 5 3 9" />
      </div>
    </div>
  </aside>
)

interface SnapBoxProps {
  label: string
  checked?: boolean
  disabled?: boolean
}

const SnapBox: React.FC<SnapBoxProps> = ({ label, checked = false, disabled = false }) => (
  <label className="flex items-center gap-[3px]">
    <span className="relative flex">
      <input
        type="checkbox"
        defaultChecked={checked}
        className={clsx(
          'peer appearance-none border',
          disabled ? 'size-3 border-[#b0b0b0] bg-[#e2e2e2]' : 'size-[13px] border-[#333] bg-white',
        )}
      />
      <svg viewBox="0 0 13 13" className="absolute inset-0 hidden peer-checked:block pointer-events-none" fill="none" stroke="#222"><path d="M2.500 6.500 5 9.500 10.500 3.500" /></svg>
    </span>
    {label}
  </label>
)

const statusCell = 'flex items-center justify-center h-[19px] border-r border-[#b9c0da]'

const StatusBar: React.FC = () => (
  <footer className="text-[11px] text-[#333]">
    <div className="flex items-center h-[26px] pt-1.5 pl-[9px]">
      <div className="flex items-center gap-[7px]">
        {osnaps.map(([label, checked]) => <SnapBox key={label} label={label} checked={checked} />)}
        <div className="flex gap-4 pl-1.5">
          <SnapBox label="Project" disabled />
          <SnapBox label="Disable" disabled />
        </div>
      </div>
    </div>
    <div className="flex h-5 border-t border-[#b9c0da]">
      <button className={clsx(statusCell, 'w-[50px]')}>CPlane</button>
      <div className={clsx(statusCell, 'w-[88px]')}>x 1.77</div>
      <div className={clsx(statusCell, 'w-[88px]')}>y -18.01</div>
      <div className={clsx(statusCell, 'w-[88px]')}>z 0.00</div>
      <button className={clsx(statusCell, 'w-[88px]')}>Meters</button>
      <button className={clsx(statusCell, 'w-[168px] justify-start pl-[3px] gap-0.5')}>
        <span className="size-[14px] bg-black" />
        Default
      </button>
      <button className={clsx(statusCell, 'w-[65px]')}>Grid Snap</button>
      <button className={clsx(statusCell, 'w-[45px]')}>Ortho</button>
      <button className={clsx(statusCell, 'w-[47px]')}>Planar</button>
      <button className={clsx(statusCell, 'w-12 font-bold bg-[#ced7ee]')}>Osnap</button>
      <button className={clsx(statusCell, 'w-[73px] font-bold bg-[#ced7ee]')}>SmartTrack</button>
      <button className={clsx(statusCell, 'w-[59px]')}>Gumball</button>
      <button className={clsx(statusCell, 'w-[92px]')}>Record History</button>
      <button className={clsx(statusCell, 'w-10')}>Filter</button>
      <div className="flex items-center flex-1 pl-0.5 mr-[7px] border-r border-[#b9c0da]">Absolute tolerance: 0.01</div>
    </div>
  </footer>
)

const letter = { fontFamily: 'Liberation Sans', textAnchor: 'middle' as const, fontWeight: 700 }

const apps: { name: string; open?: boolean; art: React.ReactNode }[] = [
  { name: 'Office', art: <path d="M15 0 21 3V21L15 24 3 19 14 20V5L8 7V16L3 18V5Z" fill="#e13f12" /> },
  {
    name: 'File Explorer',
    open: true,
    art: (
      <g>
        <path d="M1 3H9L11 5H22V20H1Z" fill="#f2b632" />
        <path d="M1 7H22V20H1Z" fill="#ffd968" />
        <path d="M5 21V13H19V21H15V17H9V21Z" fill="#3f93d8" />
      </g>
    ),
  },
  {
    name: 'Word',
    art: (
      <g>
        <path d="M7 1H23L20 22H5Z" fill="#f6f8fc" stroke="#7d94c4" />
        <path d="M14 7H20M14 10H20M13 13H19M13 16H19" stroke="#5a7cc2" />
        <path d="M3 4 15 3 13 18 1 19Z" fill="#2b56a6" />
        <text x="8" y="15" fontSize="11" fill="#fff" {...letter}>W</text>
      </g>
    ),
  },
  {
    name: 'Mail',
    art: (
      <g>
        <path d="M0 9 12 1 24 9V22H0Z" fill="#0b6cbd" />
        <path d="M3 8H21V15H3Z" fill="#f3f7fb" />
        <path d="M0 9 12 16 24 9V22H0Z" fill="#2aa4ee" />
        <path d="M0 22 12 14 24 22Z" fill="#1688dc" />
      </g>
    ),
  },
  {
    name: 'Skype',
    art: (
      <g fill="#0aa1e8">
        <circle cx="12" cy="12" r="9.500" /><circle cx="7" cy="7" r="6" /><circle cx="17" cy="17" r="6" />
        <text x="12" y="18" fontSize="17" {...letter} fill="#fff">S</text>
      </g>
    ),
  },
  {
    name: 'Photoshop',
    art: (
      <g>
        <rect x="2" y="2" width="20" height="20" fill="#0c1d2c" stroke="#35bdf4" strokeWidth="2" />
        <text x="12" y="16" fontSize="11" fill="#35bdf4" {...letter}>Ps</text>
      </g>
    ),
  },
  {
    name: 'InDesign',
    art: (
      <g>
        <rect x="2" y="2" width="20" height="20" fill="#28040f" stroke="#f0347f" strokeWidth="2" />
        <text x="12" y="16" fontSize="12" fill="#f0347f" {...letter}>Id</text>
      </g>
    ),
  },
  {
    name: 'AutoCAD',
    art: (
      <g>
        <path d="M0 0H24V24H0Z" fill="#f8e9e4" />
        <text x="12" y="20" fontSize="23" fill="#b3262a" {...letter}>A</text>
      </g>
    ),
  },
  {
    name: 'Chrome',
    open: true,
    art: (
      <g>
        <circle cx="12" cy="12" r="11" fill="#d94f41" />
        <path d="M2.500 6.500A11 11 0 0 0 11 23L16.500 14.500 7.500 14.500Z" fill="#22a05b" />
        <path d="M22 7.500A11 11 0 0 1 11 23L16.500 14.500 15 8Z" fill="#fcca3b" />
        <circle cx="12" cy="12" r="5.500" fill="#f1f1f1" />
        <circle cx="12" cy="12" r="4" fill="#4d88ee" />
      </g>
    ),
  },
]

const Taskbar: React.FC = () => (
  <nav className="flex h-10 bg-[#d5d5d5] text-xs text-black">
    <div className="flex pr-[3px]">
      <button className="flex justify-center items-center w-12" aria-label="Start">
        <svg viewBox="0 0 16 16" className="size-4"><path d="M0 2.500 6.500 1.500V7.500H0ZM7.500 1.400 16 0V7.500H7.500ZM0 8.500H6.500V14.500L0 13.500ZM7.500 8.500H16V16L7.500 14.700Z" /></svg>
      </button>
      <button className="flex justify-center items-center w-12" aria-label="Search">
        <svg viewBox="0 0 16 16" className="size-4" fill="none" stroke="#000" strokeWidth="1.300"><circle cx="10" cy="6" r="5" /><path d="M6.500 9.500 0 16" /></svg>
      </button>
      <button className="flex justify-center items-center w-12" aria-label="Task View">
        <svg viewBox="0 0 18 16" className="w-[18px] h-4" fill="none" stroke="#000" strokeWidth="1.300">
          <path d="M1 0V3H12V0M1 5.500H12V11H1ZM1 16V13H12V16M15.500 0V3M15.500 8V16" /><path d="M14 4H17V7H14Z" fill="#000" stroke="none" />
        </svg>
      </button>
    </div>
    <div className="flex gap-px">
      {apps.map(({ name, open, art }) => (
        <button key={name} className="flex flex-col items-center justify-between w-12 pt-2" aria-label={name}>
          <svg viewBox="0 0 24 24" className="size-6">{art}</svg>
          <span className={clsx('w-10 h-0.5', open && 'bg-[#c4005a]')} />
        </button>
      ))}
      <button className="flex flex-col items-center justify-between w-12 pt-2 bg-[#efefef]" aria-label="Rhinoceros">
        <RhinoLogo className="size-6" />
        <span className="w-full h-0.5 bg-[#c4005a]" />
      </button>
    </div>
    <div className="flex items-center ml-auto">
      <div className="flex items-center gap-2 pr-[7px]">
        <svg viewBox="0 0 16 16" className="size-4" fill="none" stroke="#111" strokeWidth="1.500"><path d="M2.500 11 8 5.500 13.500 11" /></svg>
        <svg viewBox="0 0 16 16" className="size-4" fill="none" stroke="#111" strokeWidth="1.200"><rect x="3" y="4.500" width="7" height="7" rx="1" /><path d="M10 7.500 13 5.500V10.500L10 8.500M4 2Q8-.5 11 2M4 14Q8 16.500 11 14" /></svg>
        <svg viewBox="0 0 16 16" className="size-4" stroke="#222"><path d="M3 13Q0 13 .5 10Q1 8 3.500 8Q5 3 9 4Q11 4.500 12 7Q15.500 7 15.500 10.500Q15 13 12.500 13Z" fill="#ddd" /><path d="M3.500 8Q5 3 9 4Q11 4.500 12 7L5 10Z" fill="#888" stroke="none" /></svg>
        <svg viewBox="0 0 17 16" className="w-[17px] h-4" fill="none" stroke="#111"><path d="M6.500 4.500H14.500V12.500H5.500M15 7V10H16.500M1.500 2V4M4.500 2V4M.5 4.500H5.500V6Q3 9 3 7Q.5 8 .5 4.500M3 8V12H6" /><path d="M8 6.500H12.500V10.500H8Z" fill="#111" /></svg>
        <svg viewBox="0 0 16 16" className="size-4" fill="none" stroke="#222" strokeWidth="1.200"><path d="M2 14Q3 5 14 3M5 14Q6 8 14 6M8 14Q9 10.500 14 9M11 14Q12 12.500 14 12" /></svg>
        <svg viewBox="0 0 18 16" className="w-[18px] h-4" fill="none" stroke="#111"><path d="M1 6H3.500L7 3V13L3.500 10H1ZM9 5.500Q11 8 9 10.500M11.500 4Q14 8 11.500 12M14 2.500Q17.500 8 14 13.500" /></svg>
      </div>
      <span className="w-[22px] text-[11px]">ENG</span>
      <div className="w-20 text-center text-[11px] leading-[18px]">
        <p>7:38 μμ</p>
        <p>13/5/2021</p>
      </div>
      <button className="ml-1 mr-[19px]" aria-label="Notifications">
        <svg viewBox="0 0 18 18" className="size-[18px]" fill="none" stroke="#111" strokeWidth="1.200"><path d="M1 2H17V14H11.500L9 16.500 6.500 14H1Z" /></svg>
      </button>
      <span className="w-px h-10 mr-[3px] bg-[#9c9c9c]" />
    </div>
  </nav>
)

const App: React.FC = () => (
  <div className="flex flex-col h-screen overflow-hidden bg-[#eaebef] text-black font-['Noto_Sans',sans-serif]">
    <TopBars />
    <CommandArea />
    <ToolBar />
    <div className="flex flex-1 min-h-0 mt-2.5">
      <SideBar />
      <Viewport />
      <LayersPanel />
    </div>
    <StatusBar />
    <Taskbar />
  </div>
)

export default App
